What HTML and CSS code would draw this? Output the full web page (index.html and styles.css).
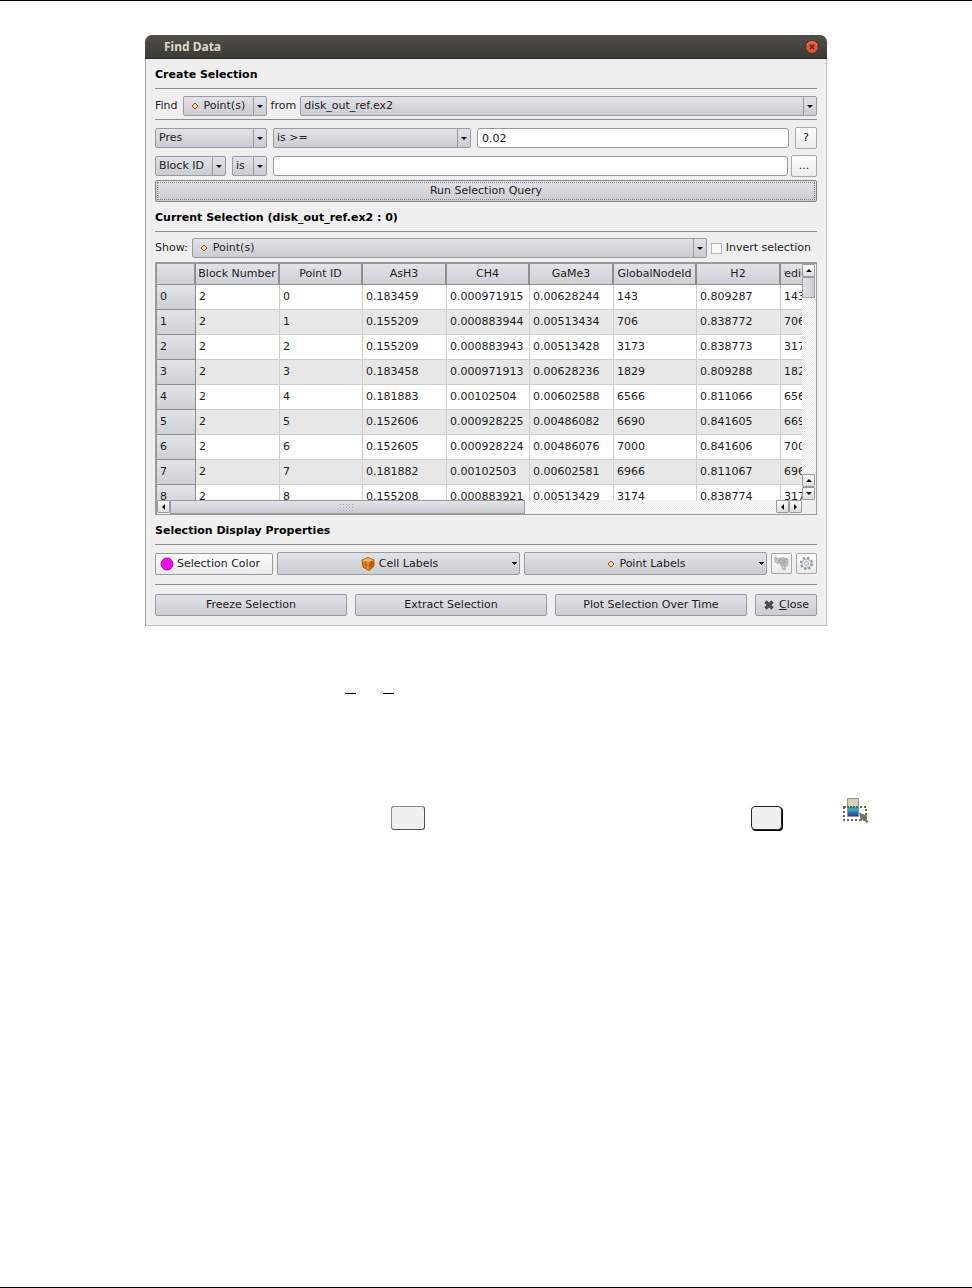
FILE: index.html
```
<!DOCTYPE html>
<html lang="en">
<head>
<meta charset="utf-8">
<title>Find Data</title>
<link rel="stylesheet" href="styles.css">
</head>

<body>
<div class="dialog">
    <div class="titlebar">
        <span>Find Data</span>
        <button class="closebtn" type="button" aria-label="Close window">
            <svg width="14" height="14" viewBox="0 0 14 14"><circle cx="7" cy="7" r="6.4" fill="#e8582f" stroke="#35322c"/><path d="M2 5a5.4 5.4 0 0 1 10 0" fill="none" stroke="#f58a66"/><path d="M4.8 4.8l4.4 4.4M9.2 4.8l-4.4 4.4" stroke="#5b2a18" stroke-width="1.5"/></svg>
        </button>
    </div>

    <form class="content" action="#">
        <h3>Create Selection</h3>
        <div class="row find">
            <label for="find">Find</label>
            <select id="find" class="combo point w84"><option>Point(s)</option></select>
            <label for="from">from</label>
            <select id="from" class="combo grow"><option>disk_out_ref.ex2</option></select>
        </div>
        <div class="row query">
            <select class="combo w112" aria-label="Array"><option>Pres</option></select>
            <select class="combo w198" aria-label="Operator"><option>is &gt;=</option></select>
            <input class="grow" type="text" value="0.02" aria-label="Value">
            <button class="tool" type="button">?</button>
        </div>
        <div class="row block">
            <select class="combo w71" aria-label="Block field"><option>Block ID</option></select>
            <select class="combo w35" aria-label="Block operator"><option>is</option></select>
            <input class="grow" type="text" aria-label="Block value">
            <button class="tool wide" type="button">...</button>
        </div>
        <button class="btn run" type="button"><span>Run Selection Query</span></button>

        <h3>Current Selection (disk_out_ref.ex2 : 0)</h3>
        <div class="row show">
            <label for="show">Show:</label>
            <select id="show" class="combo point grow"><option>Point(s)</option></select>
            <label class="check"><input type="checkbox"> Invert selection</label>
        </div>

        <div class="sheet">
            <div class="view">
                <table>
                    <colgroup><col class="c0"><col class="ca"><col class="cb"><col class="ca"><col class="cb"><col class="ca"><col class="cb"><col class="ca"><col class="cb"></colgroup>
                    <thead>
                        <tr><th></th><th>Block Number</th><th>Point ID</th><th>AsH3</th><th>CH4</th><th>GaMe3</th><th>GlobalNodeId</th><th>H2</th><th><span>PedigreeNodeId</span></th></tr>
                    </thead>
                    <tbody>
                        <tr><th>0</th><td>2</td><td>0</td><td>0.183459</td><td>0.000971915</td><td>0.00628244</td><td>143</td><td>0.809287</td><td>143</td></tr>
                        <tr><th>1</th><td>2</td><td>1</td><td>0.155209</td><td>0.000883944</td><td>0.00513434</td><td>706</td><td>0.838772</td><td>706</td></tr>
                        <tr><th>2</th><td>2</td><td>2</td><td>0.155209</td><td>0.000883943</td><td>0.00513428</td><td>3173</td><td>0.838773</td><td>3173</td></tr>
                        <tr><th>3</th><td>2</td><td>3</td><td>0.183458</td><td>0.000971913</td><td>0.00628236</td><td>1829</td><td>0.809288</td><td>1829</td></tr>
                        <tr><th>4</th><td>2</td><td>4</td><td>0.181883</td><td>0.00102504</td><td>0.00602588</td><td>6566</td><td>0.811066</td><td>6566</td></tr>
                        <tr><th>5</th><td>2</td><td>5</td><td>0.152606</td><td>0.000928225</td><td>0.00486082</td><td>6690</td><td>0.841605</td><td>6690</td></tr>
                        <tr><th>6</th><td>2</td><td>6</td><td>0.152605</td><td>0.000928224</td><td>0.00486076</td><td>7000</td><td>0.841606</td><td>7000</td></tr>
                        <tr><th>7</th><td>2</td><td>7</td><td>0.181882</td><td>0.00102503</td><td>0.00602581</td><td>6966</td><td>0.811067</td><td>6966</td></tr>
                        <tr><th>8</th><td>2</td><td>8</td><td>0.155208</td><td>0.000883921</td><td>0.00513429</td><td>3174</td><td>0.838774</td><td>3174</td></tr>
                    </tbody>
                </table>
            </div>
            <div class="vbar">
                <button type="button" aria-label="Up"><i class="up"></i></button>
                <div class="thumb"></div>
                <div class="grow"></div>
                <button type="button" aria-label="Page up"><i class="up"></i></button>
                <button type="button" aria-label="Down"><i class="down"></i></button>
            </div>
            <div class="hbar">
                <button type="button" aria-label="Left"><i class="left"></i></button>
                <div class="thumb"><span class="grip"></span></div>
                <div class="grow"></div>
                <button type="button" aria-label="Page left"><i class="left"></i></button>
                <button type="button" aria-label="Right"><i class="right"></i></button>
            </div>
        </div>

        <h3>Selection Display Properties</h3>
        <div class="row display">
            <button class="btn color" type="button"><svg width="14" height="14" viewBox="0 0 14 14"><circle cx="7" cy="7" r="6" fill="#ff00ff" stroke="#7d2a7d"/></svg>Selection Color</button>
            <button class="btn menu" type="button">
                <svg width="14" height="14" viewBox="0 0 14 14"><path d="M1 3l6-2.5L13 3v6l-5 4.500L2 10z" fill="#f08a1c" stroke="#874305" stroke-width=".8"/><path d="M1.4 3.2L7 1l5.600 2.200L8 5z" fill="#ffb45c"/><path d="M8 5v8.200l4.600-4.300V3.200z" fill="#c86408"/><path d="M4.500 4.200l.5 7M2 7l6 1.800 4.500-2.800M10.500 4v7" fill="none" stroke="#9c4e08" stroke-width=".6"/></svg>
                Cell Labels</button>
            <button class="btn menu" type="button">
                <svg width="8" height="8" viewBox="0 0 8 8"><path d="M4 1l3 3-3 3-3-3z" fill="#ffd9ac" stroke="#8a4a12"/></svg>
                Point Labels</button>
            <button class="tool small" type="button" aria-label="Label properties">
                <svg width="15" height="15" viewBox="0 0 15 15"><path d="M5 2.500l4-1 5 1.500v6l-3.500 2-4-1.500z" fill="#c4c4c4" stroke="#a8a8a8" stroke-width=".7"/><path d="M1 1.500l5 1.500v3L4.500 8 1 6zM8 9l3 1.500v3.500L8 12.500z" fill="#d2d2d2" stroke="#999" stroke-width=".7"/><path d="M2 3l6 4M3 6l5-3M8 4.500l5.500-1M7 7.500l6.500-1.500M10 3v7" fill="none" stroke="#999" stroke-width=".7"/></svg>
            </button>
            <button class="tool small" type="button" aria-label="Advanced">
                <svg width="15" height="15" viewBox="0 0 15 15"><circle cx="7.5" cy="7.5" r="5.5" fill="none" stroke="#8b98a5" stroke-width="2.2" stroke-dasharray="2.3 2.02"/><circle cx="7.5" cy="7.5" r="4.5" fill="#e6ebf0" stroke="#8b98a5" stroke-width=".8"/><circle cx="7.5" cy="7.5" r="2" fill="#fff" stroke="#8b98a5" stroke-width=".8"/></svg>
            </button>
        </div>
        <div class="row actions">
            <button class="btn grow" type="button">Freeze Selection</button>
            <button class="btn grow" type="button">Extract Selection</button>
            <button class="btn grow" type="button">Plot Selection Over Time</button>
            <button class="btn close" type="button"><svg width="12" height="12" viewBox="0 0 12 12"><path d="M2.5 2.5l7 7M9.5 2.5l-7 7" stroke="#4c4c4c" stroke-width="3.4"/></svg><span><u>C</u>lose</span></button>
        </div>
    </form>
</div>

<div class="blanks"><span></span><span></span></div>

<div class="keys">
    <span class="key"></span>
    <span class="key raised"></span>
    <svg width="26" height="28" viewBox="0 0 26 28">
        <defs><linearGradient id="rainbow" x1="0" y1="0" x2="0" y2="1"><stop offset="0" stop-color="#2f9e6c"/><stop offset=".35" stop-color="#16b5dc"/><stop offset=".65" stop-color="#2468c8"/><stop offset="1" stop-color="#552ba0"/></linearGradient></defs>
        <path d="M1 10h22v13H1z" fill="none" stroke="#6f6c50" stroke-width="2" stroke-dasharray="2 2"/>
        <path d="M4.500 1.500h11v18h-11z" fill="#d9cdbd" stroke="#9c9688"/>
        <path d="M5 10h10v9H5z" fill="url(#rainbow)"/>
        <path d="M4 10h12" stroke="#5f7033" stroke-width="2" stroke-dasharray="2 1"/>
        <path d="M16 15.500l9 3.500-3 1.500 3.500 4-2 1.500-3.300-4L18 24z" fill="#77735f"/>
    </svg>
</div>
</body>
</html>
```
FILE: styles.css
```
* {
    box-sizing: border-box;
}
body {
    margin: 0;
    min-height: 100vh;
    padding-top: 34px;
    border-top: 1px solid #000;
    border-bottom: 1px solid #000;
    background: #fff;
    color: #1c1c1c;
    font: 11px/14px "DejaVu Sans", sans-serif;
}
button, input, select {
    margin: 0;
    font: inherit;
    color: inherit;
}
svg {
    flex: none;
}
.grow {
    flex: 1;
    min-width: 0;
}

/* window */
.dialog {
    margin: 0 145px;
    border-radius: 7px 7px 0 0;
    background: #efefef;
    overflow: hidden;
}
.titlebar {
    display: flex;
    align-items: center;
    justify-content: space-between;
    height: 24px;
    padding: 0 8px 0 19px;
    background: linear-gradient(#504e47, #3d3b36);
    border-bottom: 1px solid #2c2a27;
    color: #dfd8c9;
    font-family: "Noto Sans", sans-serif;
    font-size: 12px;
    font-weight: bold;
}
.closebtn {
    display: flex;
    padding: 0;
    border: 0;
    background: none;
}
.content {
    padding: 0 9px 9px;
    border: 1px solid #c0c0c0;
    border-top: 0;
    border-left-color: #a8a8a8;
}
h3 {
    margin: 0;
    height: 30px;
    padding-top: 9px;
    border-bottom: 1px solid #8c8c8c;
    color: #000;
    font-size: 11px;
    line-height: 14px;
}
.row {
    display: flex;
    align-items: center;
}

/* controls */
.combo {
    appearance: none;
    height: 20px;
    padding: 0 16px 0 3px;
    border: 1px solid #9a9ba0;
    border-radius: 2px;
    background:
        url("data:image/svg+xml,%3Csvg xmlns='http://www.w3.org/2000/svg' width='13' height='18'%3E%3Cpath d='M.5 0v18' stroke='%239a9ba0'/%3E%3Cpath d='M4 8h6l-3 3z' fill='%23111'/%3E%3C/svg%3E") right center no-repeat,
        linear-gradient(#e2e3e9, #cbccd2);
}
.combo.point {
    padding-left: 20px;
    background:
        url("data:image/svg+xml,%3Csvg xmlns='http://www.w3.org/2000/svg' width='8' height='8'%3E%3Cpath d='M4 1l3 3-3 3-3-3z' fill='%23ffd9ac' stroke='%238a4a12'/%3E%3C/svg%3E") 7px center no-repeat,
        url("data:image/svg+xml,%3Csvg xmlns='http://www.w3.org/2000/svg' width='13' height='18'%3E%3Cpath d='M.5 0v18' stroke='%239a9ba0'/%3E%3Cpath d='M4 8h6l-3 3z' fill='%23111'/%3E%3C/svg%3E") right center no-repeat,
        linear-gradient(#e2e3e9, #cbccd2);
}
.w35 { width: 35px; }
.w71 { width: 71px; }
.w84 { width: 84px; }
.w112 { width: 112px; }
.w198 { width: 198px; }
input[type=text] {
    height: 20px;
    padding: 0 4px;
    border: 1px solid #9a9a9a;
    border-radius: 3px;
    background: #fff;
}
.btn {
    display: flex;
    align-items: center;
    justify-content: center;
    height: 22px;
    padding: 0 4px;
    border: 1px solid #9a9ba0;
    border-radius: 2px;
    background: linear-gradient(#e2e3e9, #cbccd2);
}
.tool {
    display: flex;
    align-items: center;
    justify-content: center;
    width: 22px;
    height: 22px;
    padding: 0;
    border: 1px solid #a8a8a8;
    border-radius: 2px;
    background: linear-gradient(#fdfdfd, #ebebeb);
}
.tool.wide {
    width: 26px;
}
.tool.small {
    width: 21px;
    height: 21px;
}

/* create selection */
.find {
    gap: 4px;
    height: 31px;
    padding-top: 4px;
    border-bottom: 1px solid #8c8c8c;
}
.find label:first-child {
    margin-right: 1px;
}
.query {
    gap: 6px;
    height: 36px;
}
.block {
    gap: 6px;
    height: 20px;
}
.block input {
    margin-right: -3px;
}
.run {
    width: 100%;
    margin-top: 4px;
    padding: 1px;
    border-color: #808185;
}
.run span {
    flex: 1;
    border: 1px dotted #808185;
    line-height: 16px;
}

/* current selection */
.show {
    gap: 4px;
    height: 30px;
    padding-top: 2px;
}
.check {
    display: flex;
    align-items: center;
    gap: 4px;
    padding-right: 6px;
}
.check input {
    appearance: none;
    width: 11px;
    height: 11px;
    border: 1px solid #b4b4b4;
    background: #fafafa;
}
.sheet {
    display: grid;
    grid-template-columns: 1fr 14px;
    grid-template-rows: 236px 14px;
    border: 1px solid #9a9a9a;
    border-top-width: 2px;
    border-left-width: 2px;
}
.view {
    overflow: hidden;
    background: #fff;
}
table {
    width: 707px;
    table-layout: fixed;
    border-collapse: separate;
    border-spacing: 0;
}
.c0 { width: 39px; }
.ca { width: 84px; }
.cb { width: 83px; }
td {
    height: 25px;
    padding: 0 3px 1px;
    border-right: 1px solid #cfcfcf;
    border-bottom: 1px solid #cfcfcf;
}
tbody tr:nth-child(even) td {
    background: #e7e7e7;
}
th {
    height: 25px;
    padding: 0 3px;
    border-right: 1px solid #8e8e90;
    border-bottom: 1px solid #8e8e90;
    background: linear-gradient(#e2e3e9, #cfd0d6);
    font-weight: normal;
    text-align: left;
}
thead th {
    height: 21px;
    padding: 0;
    border-right-width: 2px;
    text-align: center;
}
thead span {
    display: flex;
    justify-content: center;
    margin: 0 3px;
    overflow: hidden;
}
.vbar, .hbar {
    display: flex;
    background: repeating-conic-gradient(#eaeaea 0 25%, #fafafa 0 50%) 0 0 / 2px 2px;
}
.vbar {
    flex-direction: column;
}
.vbar button, .hbar button {
    display: flex;
    flex: none;
    align-items: center;
    justify-content: center;
    width: 13px;
    height: 13px;
    padding: 0;
    border: 1px solid #9a9a9a;
    border-radius: 1px;
    background: linear-gradient(#fbfbfb, #dcdce0);
}
.vbar .thumb {
    width: 13px;
    height: 21px;
    border: 1px solid #9a9ba0;
    background: linear-gradient(to right, #e2e3e9, #cbccd2);
}
.hbar .thumb {
    display: flex;
    align-items: center;
    justify-content: center;
    width: 55%;
    border: 1px solid #9a9ba0;
    background: linear-gradient(#e2e3e9, #cbccd2);
}
.grip {
    width: 16px;
    height: 9px;
    background: radial-gradient(#aaabb0 1px, transparent 1px) 0 0 / 3px 3px;
}
.up, .down {
    border: 3px solid transparent;
}
.up {
    border-top: 0;
    border-bottom-color: #111;
}
.down {
    border-bottom: 0;
    border-top-color: #111;
}
.left, .right {
    border: 3px solid transparent;
}
.left {
    border-left: 0;
    border-right-color: #111;
}
.right {
    border-right: 0;
    border-left-color: #111;
}

/* display properties */
.display {
    gap: 4px;
    height: 40px;
    padding-bottom: 2px;
    border-bottom: 1px solid #8c8c8c;
}
.color {
    width: 118px;
    justify-content: flex-start;
    gap: 3px;
    background: linear-gradient(#fdfdfd, #ebebeb);
}
.menu {
    flex: 1;
    gap: 4px;
    height: 23px;
    padding-right: 2px;
}
.menu::before {
    content: "";
    flex: 1;
}
.menu::after {
    content: "";
    flex: 1;
    height: 3px;
    background: conic-gradient(from -45deg at 50% 100%, #111 0 90deg, transparent 0) right / 5px 3px no-repeat;
}
.actions {
    gap: 8px;
    padding-top: 9px;
}
.close {
    width: 62px;
    gap: 4px;
}

/* below the window */
.blanks {
    display: flex;
    gap: 27px;
    padding: 67px 0 0 345px;
}
.blanks span {
    width: 11px;
    height: 1px;
    background: #000;
}
.keys {
    display: flex;
    align-items: flex-end;
    padding: 103px 0 0 391px;
}
.key {
    width: 34px;
    height: 24px;
    border: 1px solid #555;
    border-top-color: #8c8c8c;
    border-left-color: #8c8c8c;
    border-radius: 3px;
    background: #f0f0f0;
}
.key.raised {
    width: 31px;
    margin: 0 61px 0 326px;
    border-color: #222;
    border-radius: 4px;
    box-shadow: 1px 1px 0 #000;
}
.keys svg {
    margin-bottom: 5px;
}
```
